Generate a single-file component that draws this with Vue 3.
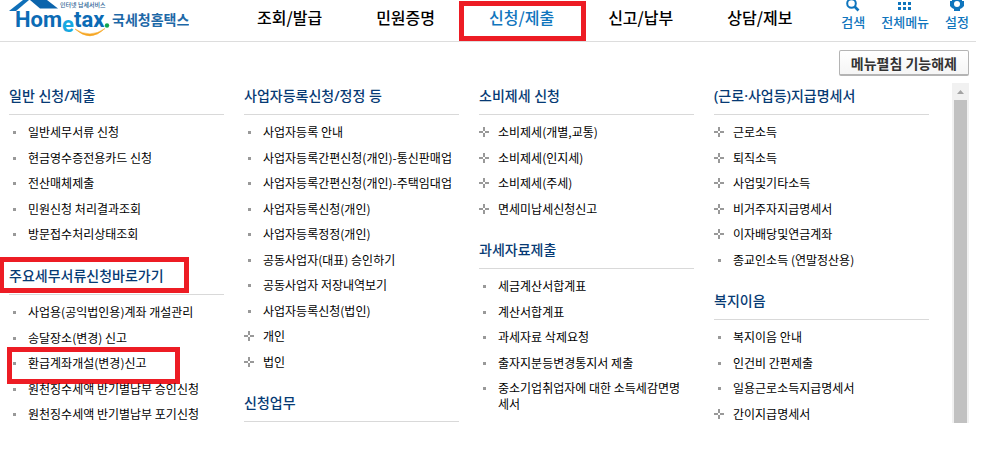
<script setup>
const navItems = [
  { label: '조회/발급' },
  { label: '민원증명' },
  { label: '신청/제출', active: true },
  { label: '신고/납부' },
  { label: '상담/제보' },
]

const leaf = (label, marked = false) => ({ label, marked, group: false })
const group = (label) => ({ label, marked: false, group: true })

const columns = [
  [
    {
      title: '일반 신청/제출',
      items: [
        leaf('일반세무서류 신청'),
        leaf('현금영수증전용카드 신청'),
        leaf('전산매체제출'),
        leaf('민원신청 처리결과조회'),
        leaf('방문접수처리상태조회'),
      ],
    },
    {
      title: '주요세무서류신청바로가기',
      marked: true,
      items: [
        leaf('사업용(공익법인용)계좌 개설관리'),
        leaf('송달장소(변경) 신고'),
        leaf('환급계좌개설(변경)신고', true),
        leaf('원천징수세액 반기별납부 승인신청'),
        leaf('원천징수세액 반기별납부 포기신청'),
      ],
    },
  ],
  [
    {
      title: '사업자등록신청/정정 등',
      items: [
        leaf('사업자등록 안내'),
        leaf('사업자등록간편신청(개인)-통신판매업'),
        leaf('사업자등록간편신청(개인)-주택임대업'),
        leaf('사업자등록신청(개인)'),
        leaf('사업자등록정정(개인)'),
        leaf('공동사업자(대표) 승인하기'),
        leaf('공동사업자 저장내역보기'),
        leaf('사업자등록신청(법인)'),
        group('개인'),
        group('법인'),
      ],
    },
    { title: '신청업무', items: [] },
  ],
  [
    {
      title: '소비제세 신청',
      items: [
        group('소비제세(개별,교통)'),
        group('소비제세(인지세)'),
        group('소비제세(주세)'),
        group('면세미납세신청신고'),
      ],
    },
    {
      title: '과세자료제출',
      items: [
        leaf('세금계산서합계표'),
        leaf('계산서합계표'),
        leaf('과세자료 삭제요청'),
        leaf('출자지분등변경통지서 제출'),
        leaf('중소기업취업자에 대한 소득세감면명세서'),
      ],
    },
  ],
  [
    {
      title: '(근로·사업등)지급명세서',
      items: [
        group('근로소득'),
        group('퇴직소득'),
        group('사업및기타소득'),
        group('비거주자지급명세서'),
        group('이자배당및연금계좌'),
        leaf('종교인소득 (연말정산용)'),
      ],
    },
    {
      title: '복지이음',
      items: [
        leaf('복지이음 안내'),
        leaf('인건비 간편제출'),
        leaf('일용근로소득지급명세서'),
        group('간이지급명세서'),
      ],
    },
  ],
]
</script>

<template>
  <div class="page">
    <header class="header">
      <a class="logo" href="#" aria-label="국세청홈택스">
        <svg width="180" height="40" viewBox="9 0 180 40">
          <path d="M9 11 L23 0 H29 L16 11 Z" fill="#0f6fb8" />
          <path d="M30 0 H47 L58 8.500 H40 Z" fill="#0b64ac" />
          <text class="logo-sub" x="60" y="7">인터넷 납세서비스</text>
          <text class="logo-word" x="15" y="27">Hom</text>
          <text class="logo-word logo-e" x="62" y="32">e</text>
          <text class="logo-word" x="74" y="27">tax</text>
          <circle cx="107" cy="25.500" r="2.200" fill="#12a650" />
          <path d="M75 29 Q90 43 105 28.500 Q90 39 75 29 Z" fill="#f6a623" stroke="#f6a623" stroke-width="0.500" />
          <text class="logo-name" x="112" y="25">국세청홈택스</text>
        </svg>
      </a>
      <nav class="nav">
        <a v-for="item in navItems" :key="item.label" href="#" :class="{ active: item.active }">
          {{ item.label }}<span v-if="item.active" class="mark mark-nav"></span>
        </a>
      </nav>
      <div class="tools">
        <button type="button" class="tool">
          <svg width="16" height="12" viewBox="0 0 16 12">
            <circle cx="6.500" cy="3.500" r="4.300" fill="none" stroke="#0f75bd" stroke-width="2" />
            <path d="M9.500 6.500 L13.500 10.500" stroke="#0f75bd" stroke-width="2.600" />
          </svg>
          검색
        </button>
        <button type="button" class="tool">
          <svg width="14" height="12" viewBox="0 0 14 12" fill="#0f75bd">
            <path d="M0 2h3v3h-3z M5 2h3v3h-3z M10 2h3v3h-3z M0 7h3v3h-3z M5 7h3v3h-3z M10 7h3v3h-3z" />
          </svg>
          전체메뉴
        </button>
        <button type="button" class="tool">
          <svg width="14" height="12" viewBox="0 0 14 12">
            <path d="M2 0 H12 V1 H14 V6 L12 8 L10 9 V11 H4 V9 L2 8 L0 6 V1 H2 Z" fill="#0f75bd" />
            <circle cx="7" cy="4" r="3" fill="#fff" />
          </svg>
          설정
        </button>
      </div>
    </header>

    <main class="panel">
      <div class="panel-bar">
        <button type="button" class="toggle">메뉴펼침 기능해제</button>
      </div>
      <div class="pane">
        <div class="columns">
          <div v-for="(sections, index) in columns" :key="index" class="column">
            <section v-for="section in sections" :key="section.title" class="section">
              <h2>
                {{ section.title }}<span v-if="section.marked" class="mark mark-title"></span>
              </h2>
              <ul v-if="section.items.length">
                <li v-for="item in section.items" :key="item.label">
                  <svg v-if="item.group" class="plus" width="10" height="10" viewBox="0 0 10 10">
                    <path d="M4 0h2v4h-2z M4 6h2v4h-2z M0 4h4v2h-4z M6 4h4v2h-4z" fill="#999" />
                  </svg>
                  <span v-else class="dot"></span>
                  <a href="#">{{ item.label }}</a>
                  <span v-if="item.marked" class="mark mark-item"></span>
                </li>
              </ul>
            </section>
          </div>
        </div>
        <div class="scrollbar">
          <svg width="17" height="17" viewBox="0 0 17 17">
            <path d="M5 11 L8.500 7 L12 11 Z" fill="#a3a3a3" />
          </svg>
          <div class="thumb"></div>
        </div>
      </div>
    </main>
  </div>
</template>

<style>
body {
  background: #fff;
}
</style>

<style scoped>
.page {
  padding-right: 29px;
  font-family: 'Noto Sans CJK KR', sans-serif;
  font-size: 12px;
  color: #000;
}

a {
  color: inherit;
  text-decoration: none;
}

button {
  font-family: inherit;
  cursor: pointer;
}

.header {
  display: flex;
  align-items: flex-start;
  height: 41px;
  padding: 0 7px 0 9px;
  border-bottom: 1px solid #ddd;
}

.logo {
  display: block;
  height: 40px;
}

.logo svg {
  display: block;
}

.logo-sub {
  font-size: 6px;
  font-weight: 500;
  fill: #2c5f94;
}

.logo-word {
  font-family: Roboto, sans-serif;
  font-size: 22px;
  font-weight: 700;
  fill: #0b6bb5;
}

.logo-e {
  fill: #16a9e1;
}

.logo-name {
  font-size: 14px;
  font-weight: 700;
  fill: #1d68a7;
}

.nav {
  display: flex;
  gap: 54px;
  margin-left: 68px;
  padding-top: 5px;
  font-size: 16px;
  font-weight: 500;
  line-height: 24px;
  white-space: nowrap;
}

.nav a {
  position: relative;
}

.nav .active {
  color: #0f75bd;
}

.mark {
  position: absolute;
  box-sizing: border-box;
  border: 5px solid #ed1c24;
  pointer-events: none;
}

.mark-nav {
  inset: -4px -32px -12px -30px;
}

.mark-title {
  inset: -9px 35px 1px -10px;
}

.mark-item {
  inset: -3px 44px -8px -2px;
}

.tools {
  display: flex;
  gap: 16px;
  margin-left: auto;
}

.tool {
  display: flex;
  flex-direction: column;
  align-items: center;
  padding: 0;
  border: 0;
  background: none;
  color: #0f75bd;
  font-size: 13px;
  font-weight: 500;
  line-height: 20px;
  white-space: nowrap;
}

.panel {
  padding: 8px 7px 0 9px;
}

.panel-bar {
  display: flex;
  justify-content: flex-end;
  margin-bottom: 7px;
}

.toggle {
  height: 26px;
  padding: 0 11px;
  border: 1px solid #b4b4b4;
  border-bottom-width: 2px;
  border-radius: 2px;
  background: linear-gradient(#fff, #f5f5f5);
  color: #333;
  font-size: 14px;
  font-weight: 700;
  line-height: 22px;
}

.pane {
  display: flex;
  gap: 23px;
  max-height: 340px;
}

.columns {
  display: grid;
  flex: 1;
  grid-template-columns: repeat(4, minmax(0, 1fr));
  gap: 20px;
  margin-left: -9px;
  padding: 3px 0 0 9px;
  overflow: hidden;
}

.section + .section {
  margin-top: 19px;
}

h2 {
  position: relative;
  margin: 0;
  padding-bottom: 9px;
  border-bottom: 1px solid #d9d9d9;
  color: #063a74;
  font-family: 'Noto Sans', 'Noto Sans CJK KR', sans-serif;
  font-size: 14px;
  font-weight: 500;
  line-height: 19px;
}

ul {
  display: grid;
  grid-auto-rows: minmax(26px, auto) minmax(25px, auto);
  margin: 0;
  padding: 4px 0 0;
  list-style: none;
}

li {
  position: relative;
  display: flex;
  align-items: flex-start;
  padding: 5px 5px 4px 19px;
  line-height: 16px;
  word-break: break-all;
}

.dot {
  position: absolute;
  top: 12px;
  left: 4px;
  width: 3px;
  height: 3px;
  background: #999;
}

.plus {
  position: absolute;
  top: 8px;
  left: 0;
}

.scrollbar {
  display: flex;
  flex-direction: column;
  width: 17px;
  background: #f1f1f1;
}

.scrollbar svg {
  display: block;
}

.thumb {
  flex: 1;
  margin: 0 2px;
  background: #c1c1c1;
}
</style>
